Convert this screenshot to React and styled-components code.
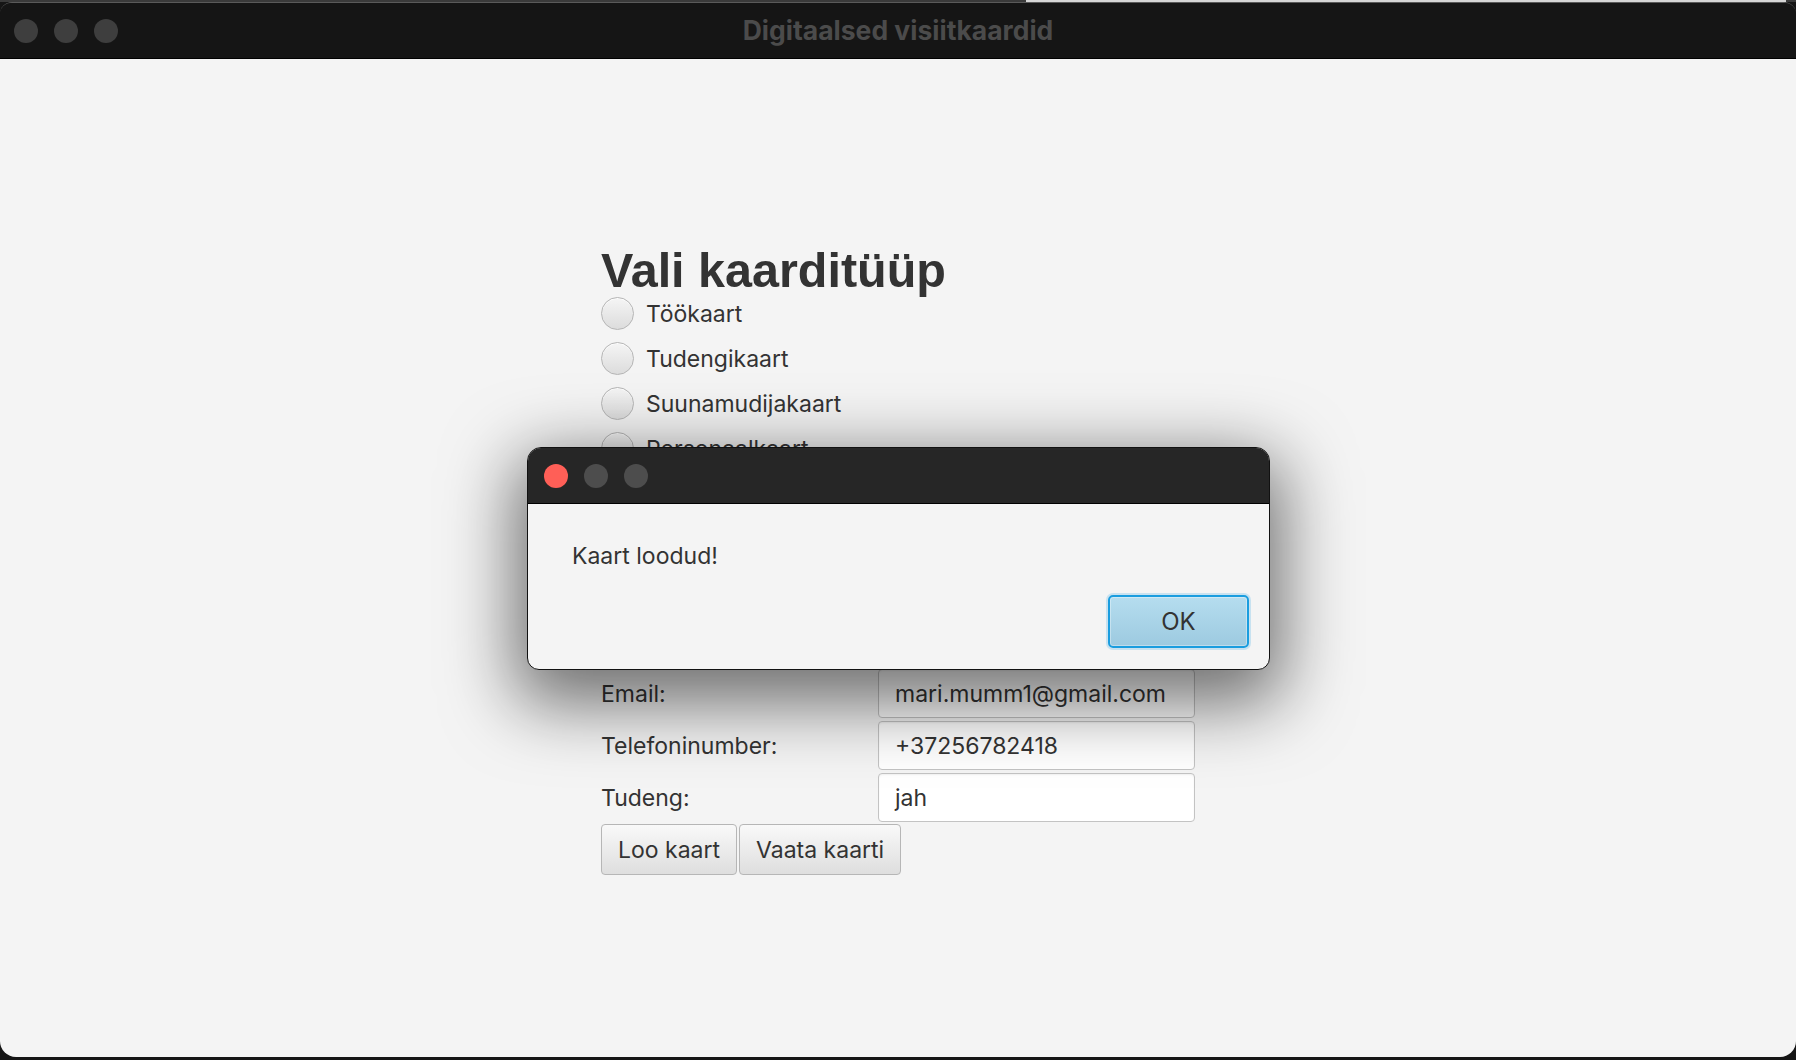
import React from 'react';
import styled, { createGlobalStyle } from 'styled-components';

const GlobalStyle = createGlobalStyle`
  html, body {
    margin: 0;
    padding: 0;
    background: #151515;
  }
  * {
    box-sizing: border-box;
  }
`;

const UI_FONT = `Inter, "Liberation Sans", sans-serif`;

const Screen = styled.div`
  position: relative;
  width: 1796px;
  height: 1060px;
  display: flex;
  flex-direction: column;
  overflow: hidden;
  background: #151515;
  font-family: ${UI_FONT};
`;

const TopStrip = styled.div`
  height: 2px;
  display: flex;
  background: #3a3a3a;
`;

const StripGap = styled.div`
  width: 1026px;
`;

const StripLight = styled.div`
  width: 760px;
  background: #d6d6d6;
`;

const Window = styled.div`
  flex: 1;
  display: flex;
  flex-direction: column;
  margin-bottom: 3px;
  border-top: 1px solid #5a5a5a;
  border-radius: 12px 12px 16px 16px;
  overflow: hidden;
`;

const TitleBar = styled.div`
  height: 56px;
  display: grid;
  grid-template-columns: 1fr auto 1fr;
  align-items: center;
  background: ${(p) => p.$bg || '#151515'};
  border-bottom: 1px solid #000;
`;

const Lights = styled.div`
  display: flex;
  gap: 16px;
  padding-left: ${(p) => p.$pad || 14}px;
`;

const Light = styled.span`
  width: 24px;
  height: 24px;
  border-radius: 50%;
  background: ${(p) => p.$color};
`;

const WindowTitle = styled.div`
  font-size: 26.5px;
  font-weight: 700;
  color: #4b4b4b;
  margin-top: -2px;
`;

const Content = styled.div`
  flex: 1;
  background: #f4f4f4;
  padding-top: 186px;
`;

const Column = styled.div`
  width: 594px;
  margin: 0 auto;
  display: flex;
  flex-direction: column;
`;

const Heading = styled.h1`
  margin: 0;
  font-family: "Liberation Sans", Arial, sans-serif;
  font-size: 48.5px;
  line-height: 50px;
  font-weight: 700;
  color: #333;
`;

const RadioList = styled.div`
  margin-top: 2px;
  display: flex;
  flex-direction: column;
  gap: 12px;
`;

const RadioRow = styled.label`
  height: 33px;
  display: flex;
  align-items: center;
  gap: 12px;
  font-size: 23px;
  color: #333;
`;

const RadioCircle = styled.span`
  width: 33px;
  height: 33px;
  border-radius: 50%;
  border: 1.5px solid #b5b5b5;
  background: linear-gradient(#f5f5f5, #dcdcdc);
  box-shadow: inset 0 1px 0 rgba(255, 255, 255, 0.8);
`;

const Form = styled.div`
  margin-top: 204px;
  display: grid;
  grid-template-columns: 277px 1fr;
  grid-auto-rows: 49px;
  row-gap: 3px;
  align-items: center;
`;

const FieldLabel = styled.span`
  font-size: 23px;
  color: #333;
`;

const Field = styled.div`
  height: 49px;
  display: flex;
  align-items: center;
  padding: 0 16px;
  background: #fff;
  border: 1px solid #c3c3c3;
  border-radius: 4px;
  box-shadow: inset 0 1px 2px rgba(0, 0, 0, 0.06);
  font-size: 23px;
  color: #333;
`;

const ButtonRow = styled.div`
  margin-top: 2px;
  display: flex;
  gap: 2px;
`;

const Button = styled.button`
  height: 51px;
  padding: 0 16px;
  font-family: ${UI_FONT};
  font-size: 23px;
  color: #333;
  background: linear-gradient(#f9f9f9, #dedede);
  border: 1px solid #b6b6b6;
  border-radius: 4px;
`;

const Dialog = styled.div`
  position: absolute;
  left: 527px;
  top: 447px;
  width: 743px;
  height: 223px;
  display: flex;
  flex-direction: column;
  border: 1px solid #111;
  border-radius: 14px 14px 12px 12px;
  overflow: hidden;
  background: #f4f4f4;
  box-shadow: 0 22px 70px 12px rgba(0, 0, 0, 0.55);
`;

const DialogBody = styled.div`
  flex: 1;
  display: flex;
  flex-direction: column;
  padding: 37px 20px 21px 44px;
`;

const Message = styled.div`
  font-size: 23px;
  line-height: 30px;
  color: #333;
`;

const DialogActions = styled.div`
  margin-top: auto;
  display: flex;
  justify-content: flex-end;
`;

const OkButton = styled.button`
  width: 141px;
  height: 53px;
  font-family: ${UI_FONT};
  font-size: 24px;
  color: #333;
  border: 2px solid #1a9ddf;
  border-radius: 5px;
  background: linear-gradient(#b5ddef, #9dcae0);
  box-shadow: 0 0 0 2px rgba(26, 157, 223, 0.2), inset 0 0 0 1px rgba(255, 255, 255, 0.35);
`;

const cardTypes = ['Töökaart', 'Tudengikaart', 'Suunamudijakaart', 'Personaalkaart'];

const fields = [
  ['Email:', 'mari.mumm1@gmail.com'],
  ['Telefoninumber:', '+37256782418'],
  ['Tudeng:', 'jah'],
];

export default function App() {
  return (
    <>
      <GlobalStyle />
      <Screen>
        <TopStrip>
          <StripGap />
          <StripLight />
        </TopStrip>
        <Window>
          <TitleBar>
            <Lights>
              <Light $color="#3e3e3e" />
              <Light $color="#3e3e3e" />
              <Light $color="#3e3e3e" />
            </Lights>
            <WindowTitle>Digitaalsed visiitkaardid</WindowTitle>
            <span />
          </TitleBar>
          <Content>
            <Column>
              <Heading>Vali kaarditüüp</Heading>
              <RadioList>
                {cardTypes.map((t) => (
                  <RadioRow key={t}>
                    <RadioCircle />
                    {t}
                  </RadioRow>
                ))}
              </RadioList>
              <Form>
                {fields.map(([label, value]) => (
                  <React.Fragment key={label}>
                    <FieldLabel>{label}</FieldLabel>
                    <Field>{value}</Field>
                  </React.Fragment>
                ))}
              </Form>
              <ButtonRow>
                <Button>Loo kaart</Button>
                <Button>Vaata kaarti</Button>
              </ButtonRow>
            </Column>
          </Content>
        </Window>

        <Dialog>
          <TitleBar $bg="#262626">
            <Lights $pad={16}>
              <Light $color="#ff5f57" />
              <Light $color="#4d4d4d" />
              <Light $color="#4d4d4d" />
            </Lights>
          </TitleBar>
          <DialogBody>
            <Message>Kaart loodud!</Message>
            <DialogActions>
              <OkButton>OK</OkButton>
            </DialogActions>
          </DialogBody>
        </Dialog>
      </Screen>
    </>
  );
}
